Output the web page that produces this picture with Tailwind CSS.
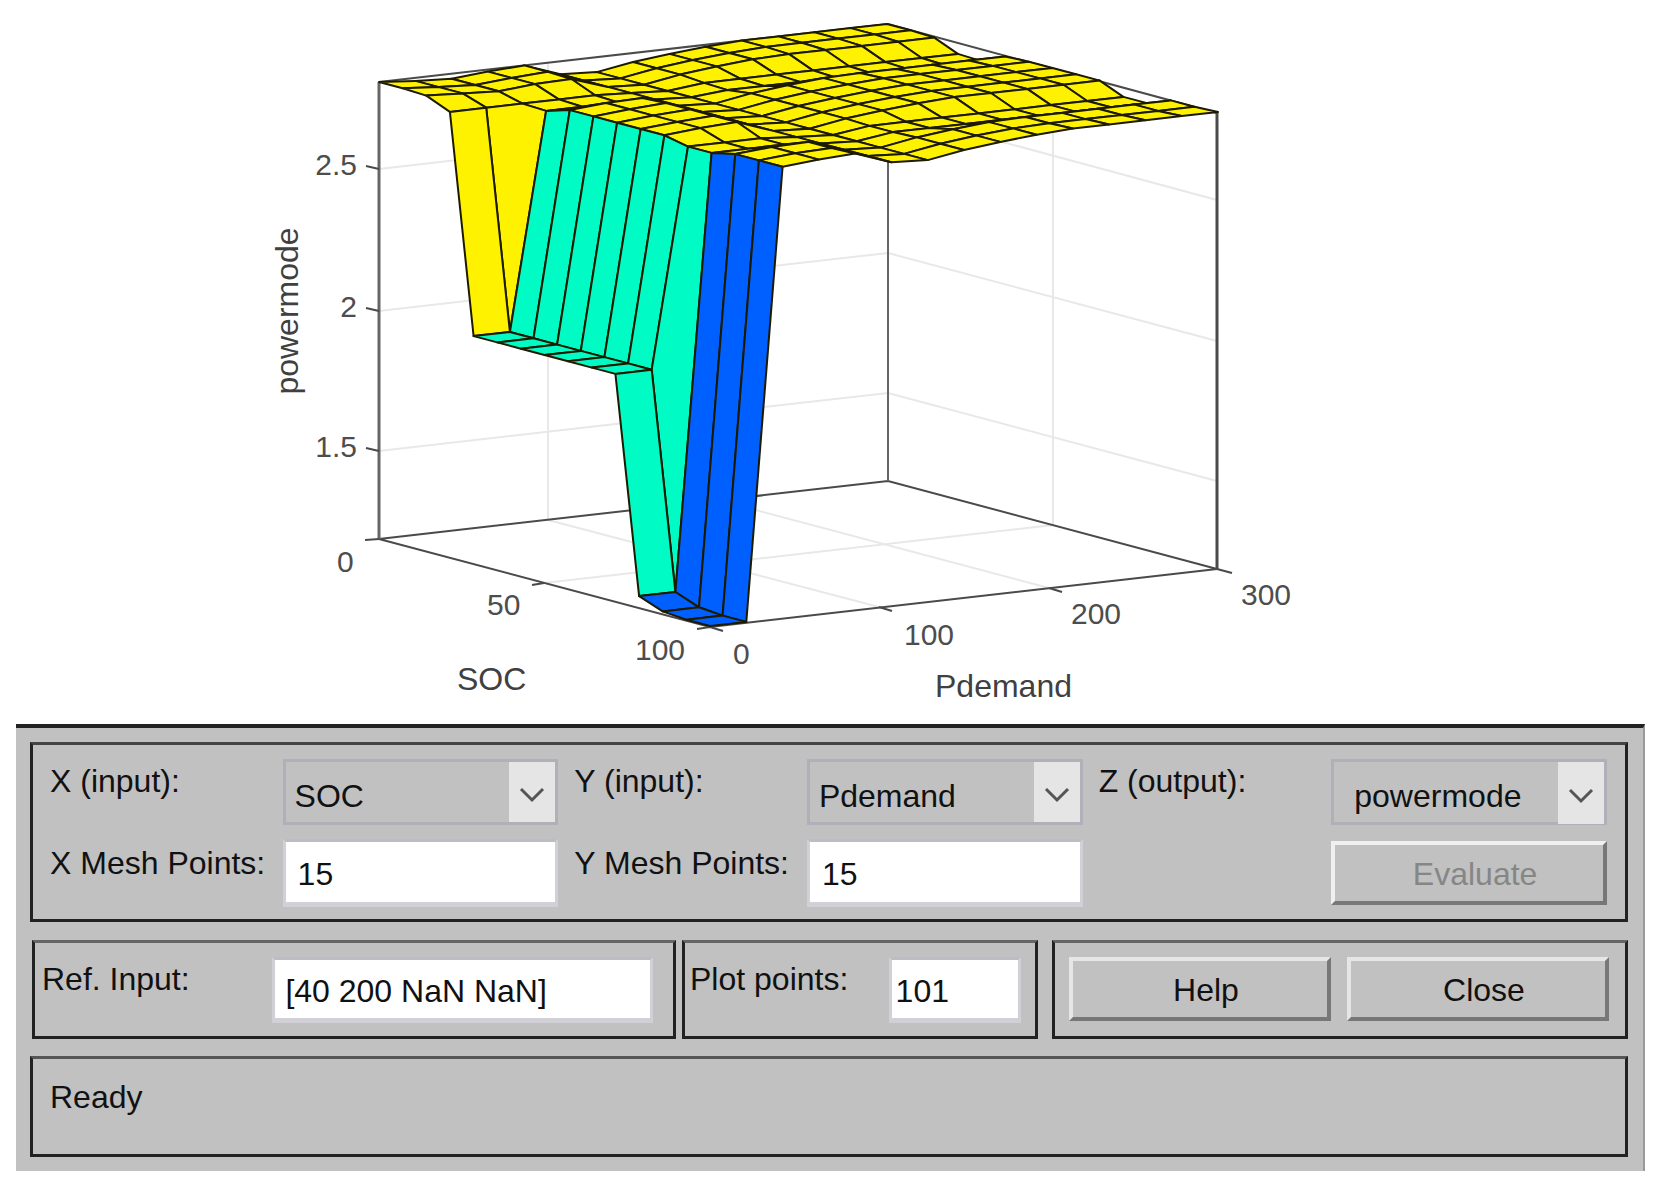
<!DOCTYPE html>
<html lang="en">
<head>
    <meta charset="UTF-8">
    <meta name="viewport" content="width=device-width, initial-scale=1.0">
    <title>Surface Viewer</title>
    <script src="https://cdn.jsdelivr.net/npm/@tailwindcss/browser@4"></script>
</head>
<body class="bg-white text-[#111] text-[32px] leading-9 font-['Liberation_Sans',Arial,sans-serif]">

    <!-- Surface plot -->
    <svg viewBox="0 0 1665 724" class="block w-full" role="img" aria-label="Surface of powermode over SOC and Pdemand">
        <!-- Grid lines -->
        <g fill="none" stroke="#e8e8e8" stroke-width="2">
            <path d="M379 169L888 111L1217 200M379 311L888 253L1217 341M379 451L888 393L1217 481"/>
            <path d="M548 520V63M718 500V43M548 520L879 607M718 500L1049 588"/>
            <path d="M544 583L1053 525V68"/>
        </g>
        <!-- Axes box -->
        <g fill="none" stroke="#4a4a4a" stroke-width="2">
            <path d="M379 82L888 24L1217 113"/>
            <path d="M379 539L888 481L1217 569L710 627Z"/>
            <path d="M888 24V481" stroke="#666"/>
            <path d="M379 82V539" stroke="#666" stroke-width="3"/>
            <path d="M1217 113V569" stroke-width="3"/>
            <path d="M379 169L366 166M379 311L366 308M379 451L366 448M379 539L365 540"/>
            <path d="M544 583L532 585M710 627L697 629M710 627L723 631M879 607L892 611M1049 588L1062 592M1217 569L1232 573"/>
        </g>
        <g id="mesh" stroke="#1c1a00" stroke-width="2" stroke-linejoin="round"></g>
        <!-- Tick labels -->
        <g fill="#4d4d4d" font-size="30">
            <text x="357" y="175" text-anchor="end">2.5</text>
            <text x="357" y="317" text-anchor="end">2</text>
            <text x="357" y="457" text-anchor="end">1.5</text>
            <text x="337" y="572">0</text>
            <text x="487" y="615">50</text>
            <text x="635" y="660">100</text>
            <text x="733" y="664">0</text>
            <text x="904" y="645">100</text>
            <text x="1071" y="624">200</text>
            <text x="1241" y="605">300</text>
        </g>
        <g fill="#404040" font-size="32">
            <text x="457" y="690">SOC</text>
            <text x="935" y="697">Pdemand</text>
            <text transform="translate(298 311) rotate(-90)" text-anchor="middle">powermode</text>
        </g>
    </svg>

    <main class="ml-4 mr-5 bg-[#c1c1c1] border-t-4 border-t-[#222] border-r-2 border-r-[#999] pt-[14px] pb-[14px] pl-[14px] pr-[15px]">

        <!-- Inputs and output -->
        <section class="grid grid-cols-3 gap-x-4 border-3 border-[#222] border-t-[#444] pt-[14px] pb-3 pl-[17px] pr-[18px]">
            <div class="grid grid-cols-[232fr_275fr] gap-y-[14px]">
                <label for="xInput" class="pt-1 whitespace-nowrap">X (input):</label>
                <div class="relative">
                    <select id="xInput" class="appearance-none block w-full h-[66px] border-3 border-[#b0b0b8] pl-[9px] pt-2">
                        <option>SOC</option>
                    </select>
                    <span class="absolute right-[3px] inset-y-[3px] w-[46px] bg-[#e5e5e5] flex items-center justify-center pt-[6px] pointer-events-none">
                        <svg width="26" height="16" viewBox="0 0 26 16" fill="none" stroke="#555" stroke-width="3"><path d="M2 2L13 13L24 2"/></svg>
                    </span>
                </div>
                <label for="xMesh" class="pt-[6px] whitespace-nowrap">X Mesh Points:</label>
                <input id="xMesh" type="text" value="15" class="w-full min-w-0 h-[68px] bg-white border-3 border-b-5 border-[#d0d0d6] border-t-[#bcbcc4] pl-3 pt-1">
            </div>
            <div class="grid grid-cols-[232fr_275fr] gap-y-[14px]">
                <label for="yInput" class="pt-1 whitespace-nowrap">Y (input):</label>
                <div class="relative">
                    <select id="yInput" class="appearance-none block w-full h-[66px] border-3 border-[#b0b0b8] pl-[9px] pt-2">
                        <option>Pdemand</option>
                    </select>
                    <span class="absolute right-[3px] inset-y-[3px] w-[46px] bg-[#e5e5e5] flex items-center justify-center pt-[6px] pointer-events-none">
                        <svg width="26" height="16" viewBox="0 0 26 16" fill="none" stroke="#555" stroke-width="3"><path d="M2 2L13 13L24 2"/></svg>
                    </span>
                </div>
                <label for="yMesh" class="pt-[6px] whitespace-nowrap">Y Mesh Points:</label>
                <input id="yMesh" type="text" value="15" class="w-full min-w-0 h-[68px] bg-white border-3 border-b-5 border-[#d0d0d6] border-t-[#bcbcc4] pl-3 pt-1">
            </div>
            <div class="grid grid-cols-[232fr_275fr] gap-y-[14px]">
                <label for="zOutput" class="pt-1 whitespace-nowrap">Z (output):</label>
                <div class="relative">
                    <select id="zOutput" class="appearance-none block w-full h-[66px] border-3 border-[#b0b0b8] pl-5 pt-2">
                        <option>powermode</option>
                    </select>
                    <span class="absolute right-[3px] inset-y-[3px] w-[46px] bg-[#e5e5e5] flex items-center justify-center pt-[6px] pointer-events-none">
                        <svg width="26" height="16" viewBox="0 0 26 16" fill="none" stroke="#555" stroke-width="3"><path d="M2 2L13 13L24 2"/></svg>
                    </span>
                </div>
                <button type="button" disabled class="col-start-2 h-[64px] border-4 border-t-[#f0f0f0] border-l-[#f0f0f0] border-b-[#777] border-r-[#777] text-[#868686] pl-3 pt-[2px]">Evaluate</button>
            </div>
        </section>

        <!-- Reference input, plot points, actions -->
        <div class="grid grid-cols-[644fr_356fr_584fr] gap-x-[6px] mt-[18px] pl-[2px]">
            <section class="grid grid-cols-[230fr_380fr] border-3 border-[#222] border-t-[#666] h-[99px] pt-[14px] pl-[7px] pr-5">
                <label for="refInput" class="pt-1 whitespace-nowrap">Ref. Input:</label>
                <input id="refInput" type="text" value="[40 200 NaN NaN]" class="w-full min-w-0 h-[66px] bg-white border-3 border-b-5 border-[#d0d0d6] border-t-[#bcbcc4] pl-[10px] pt-1">
            </section>
            <section class="grid grid-cols-[198fr_132fr] border-3 border-[#222] border-t-[#666] h-[99px] pt-[14px] pl-[5px] pr-[14px]">
                <label for="plotPoints" class="pt-1 whitespace-nowrap">Plot points:</label>
                <input id="plotPoints" type="text" value="101" class="w-full min-w-0 h-[66px] bg-white border-3 border-b-5 border-[#d0d0d6] border-t-[#bcbcc4] pl-1 pt-1">
            </section>
            <section class="grid grid-cols-2 gap-4 items-start border-3 border-[#222] border-t-[#666] h-[99px] pt-[14px] pl-[14px] pr-4 ml-2">
                <button type="button" class="h-[64px] border-4 border-t-[#e6e6e6] border-l-[#e6e6e6] border-b-[#777] border-r-[#777] pl-3 pt-[2px]">Help</button>
                <button type="button" class="h-[64px] border-4 border-t-[#e6e6e6] border-l-[#e6e6e6] border-b-[#777] border-r-[#777] pl-3 pt-[2px]">Close</button>
            </section>
        </div>

        <!-- Status -->
        <section class="mt-[17px] h-[101px] border-3 border-[#222] border-t-[#555] pt-5 pl-[17px]">
            <p id="status">Ready</p>
        </section>
    </main>

    <script>
        // How far the surface dips below its ceiling, along each input
        const socDip = [0, 0, 1, 11, 12, 1, 0, 0, 0, 0, 10, 10, 1, 1, 0];
        const demandDip = [0, 3, 5, 2, 0, 13, 15, 9, 5, 2, 0, 0, 0, 0, 0];
        // Steep drop at low demand, per SOC index
        const lowDrop = [0, 0, 0, 0, 229, 229, 229, 229, 229, 229, 229, 445, 454, 456, 456];

        function project(i, j) {
            const x = 379 + i * 331 / 14 + j * 508 / 14;
            let dip = Math.max(socDip[i], demandDip[j]);
            if (j < 2 && lowDrop[i]) dip = lowDrop[i];
            const y = 82 + i * 88 / 14 - j * 58 / 14 + dip;
            return `${x.toFixed(1)},${y.toFixed(1)}`;
        }

        function cellColor(i, j) {
            if (j > 1 || i < 4) return '#fff200';
            return i < 11 ? '#00fcc4' : '#005fff';
        }

        // Far cells first, so near ones cover them
        let cells = '';
        for (let i = 0; i < 14; i++) {
            for (let j = 13; j >= 0; j--) {
                const points = [project(i, j), project(i + 1, j), project(i + 1, j + 1), project(i, j + 1)];
                cells += `<polygon points="${points.join(' ')}" fill="${cellColor(i, j)}"/>`;
            }
        }
        document.getElementById('mesh').innerHTML = cells;
    </script>
</body>
</html>
